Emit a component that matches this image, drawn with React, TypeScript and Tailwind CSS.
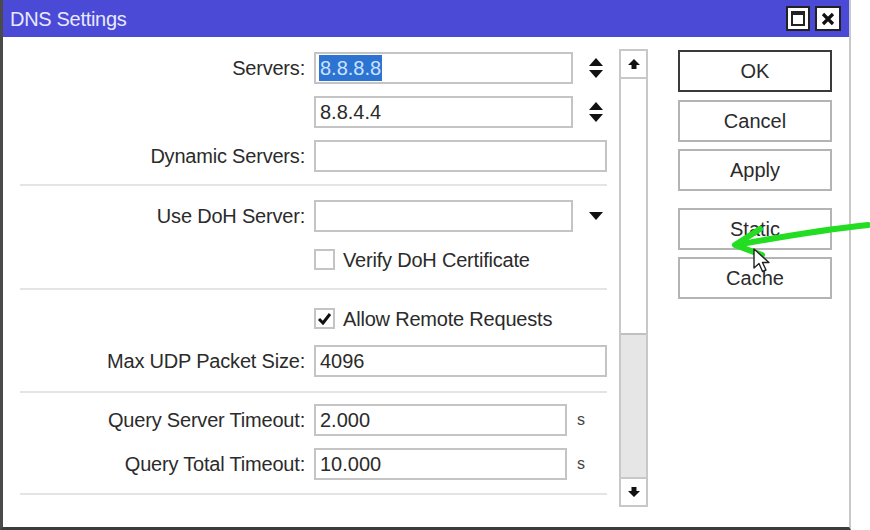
import * as React from 'react'

const font = { fontFamily: '"Liberation Sans", Arial, sans-serif' }

function UpDownIcon() {
    return (
        <svg width="16" height="24" viewBox="0 0 16 24" className="shrink-0">
            <polygon points="8,2 15,10 1,10" fill="#111" />
            <polygon points="1,14 15,14 8,22" fill="#111" />
        </svg>
    )
}

function DropIcon() {
    return (
        <svg width="16" height="10" viewBox="0 0 16 10" className="shrink-0">
            <polygon points="1,1 15,1 8,9" fill="#111" />
        </svg>
    )
}

function ScrollArrow({ down }: { down?: boolean }) {
    return (
        <svg width="14" height="12" viewBox="0 0 14 12" className={down ? 'rotate-180' : ''}>
            <polygon points="7,1 13,7 9.5,7 9.5,11 4.5,11 4.5,7 1,7" fill="#111" />
        </svg>
    )
}

function Label({ children }: { children?: React.ReactNode }) {
    return (
        <div className="w-[311px] shrink-0 pr-[9px] text-right text-[20px] leading-none tracking-[-0.2px] text-[#2b2b2b]">
            {children}
        </div>
    )
}

function Field({ value, width, selected }: { value?: string; width: string; selected?: boolean }) {
    return (
        <div className={`${width} flex h-[32px] shrink-0 items-center border-2 border-[#c4c4c4] bg-white px-[3px] text-[20px] text-[#2b2b2b]`}>
            {value ? (
                selected ? (
                    <span className="bg-[#2c73d2] px-[1px] leading-[26px] text-[#cbe4ff]">{value}</span>
                ) : (
                    <span className="pl-[1px]">{value}</span>
                )
            ) : null}
        </div>
    )
}

function Checkbox({ checked, label }: { checked?: boolean; label: string }) {
    return (
        <div className="flex h-[21px] items-center">
            <div className="w-[311px] shrink-0" />
            <div className="flex h-[21px] w-[21px] items-center justify-center border-2 border-[#c4c4c4] bg-white">
                {checked ? (
                    <svg width="15" height="13" viewBox="0 0 15 13">
                        <path d="M2 7 L6 11 L13 2" fill="none" stroke="#111" strokeWidth="3" />
                    </svg>
                ) : null}
            </div>
            <span className="ml-[8px] text-[20px] tracking-[-0.2px] text-[#2b2b2b]">{label}</span>
        </div>
    )
}

function Separator({ className }: { className: string }) {
    return <div className={`${className} ml-[17px] h-[2px] w-[587px] bg-[#e4e4e4]`} />
}

function Btn({ children, primary, className }: { children: React.ReactNode; primary?: boolean; className?: string }) {
    return (
        <div
            className={`${className ?? ''} flex h-[42px] w-[154px] items-center justify-center bg-white text-[20px] text-[#2b2b2b] ${
                primary ? 'border-2 border-[#3a3a3a]' : 'border-2 border-[#b4b4b4]'
            }`}
        >
            {children}
        </div>
    )
}

export default function App() {
    return (
        <div className="relative h-[530px] w-[870px] overflow-hidden bg-white" style={font}>
            <div className="flex h-[530px] w-[851px] flex-col border-b-[3px] border-l-[3px] border-r-2 border-b-[#3c3c3c] border-l-[#4a4a4a] border-r-[#c8c8c8]">
                {/* title bar */}
                <div className="flex h-[37px] shrink-0 items-center bg-[#4a4ad6] pl-[7px] pr-[8px]">
                    <span className="text-[20px] tracking-[-0.3px] text-[#e8e8ff]">DNS Settings</span>
                    <div className="ml-auto flex gap-[5px]">
                        <div className="flex h-[25px] w-[24px] items-center justify-center border-2 border-[#222] bg-white">
                            <div className="h-[15px] w-[14px] border-2 border-t-[4px] border-[#222]" />
                        </div>
                        <div className="flex h-[25px] w-[26px] items-center justify-center border-2 border-[#222] bg-white">
                            <svg width="14" height="14" viewBox="0 0 14 14">
                                <path d="M2 2 L12 12 M12 2 L2 12" stroke="#111" strokeWidth="3.2" />
                            </svg>
                        </div>
                    </div>
                </div>

                {/* body */}
                <div className="flex flex-1">
                    {/* form */}
                    <div className="w-[616px] shrink-0 pt-[15px]">
                        <div className="flex h-[32px] items-center">
                            <Label>Servers:</Label>
                            <Field value="8.8.8.8" width="w-[259px]" selected />
                            <div className="ml-[15px]"><UpDownIcon /></div>
                        </div>
                        <div className="mt-[12px] flex h-[32px] items-center">
                            <Label />
                            <Field value="8.8.4.4" width="w-[259px]" />
                            <div className="ml-[15px]"><UpDownIcon /></div>
                        </div>
                        <div className="mt-[12px] flex h-[32px] items-center">
                            <Label>Dynamic Servers:</Label>
                            <Field width="w-[293px]" />
                        </div>
                        <Separator className="mt-[12px] mb-[14px]" />
                        <div className="flex h-[32px] items-center">
                            <Label>Use DoH Server:</Label>
                            <Field width="w-[259px]" />
                            <div className="ml-[15px]"><DropIcon /></div>
                        </div>
                        <div className="mt-[17px]">
                            <Checkbox label="Verify DoH Certificate" />
                        </div>
                        <Separator className="mt-[18px] mb-[18px]" />
                        <Checkbox checked label="Allow Remote Requests" />
                        <div className="mt-[16px] flex h-[32px] items-center">
                            <Label>Max UDP Packet Size:</Label>
                            <Field value="4096" width="w-[293px]" />
                        </div>
                        <Separator className="mt-[14px] mb-[11px]" />
                        <div className="flex h-[32px] items-center">
                            <Label>Query Server Timeout:</Label>
                            <Field value="2.000" width="w-[253px]" />
                            <span className="ml-[10px] text-[16px] text-[#444]">s</span>
                        </div>
                        <div className="mt-[12px] flex h-[32px] items-center">
                            <Label>Query Total Timeout:</Label>
                            <Field value="10.000" width="w-[253px]" />
                            <span className="ml-[10px] text-[16px] text-[#444]">s</span>
                        </div>
                        <Separator className="mt-[13px]" />
                    </div>

                    {/* scrollbar */}
                    <div className="mt-[12px] flex h-[458px] w-[29px] shrink-0 flex-col border-2 border-[#c8c8c8] bg-white">
                        <div className="flex h-[28px] items-center justify-center border-b-2 border-[#c8c8c8]">
                            <ScrollArrow />
                        </div>
                        <div className="h-[254px]" />
                        <div className="flex-1 border-t-2 border-[#c0c0c0] bg-[#e6e6e6]" />
                        <div className="flex h-[28px] items-center justify-center border-t-2 border-[#c8c8c8]">
                            <ScrollArrow down />
                        </div>
                    </div>

                    {/* buttons */}
                    <div className="ml-[30px] flex flex-col pt-[13px]">
                        <Btn primary>OK</Btn>
                        <Btn className="mt-[8px]">Cancel</Btn>
                        <Btn className="mt-[7px]">Apply</Btn>
                        <Btn className="mt-[17px]">Static</Btn>
                        <Btn className="mt-[7px]">Cache</Btn>
                    </div>
                </div>
            </div>

            {/* green annotation arrow */}
            <svg className="pointer-events-none absolute left-[720px] top-[215px]" width="150" height="50" viewBox="0 0 150 50">
                <path d="M148 10 C 110 14, 60 22, 16 30" fill="none" stroke="#22dd22" strokeWidth="6" strokeLinecap="round" />
                <path d="M40 14 L15 30 L42 40" fill="none" stroke="#22dd22" strokeWidth="6" strokeLinecap="round" strokeLinejoin="round" />
            </svg>

            {/* mouse cursor */}
            <svg className="pointer-events-none absolute left-[752px] top-[247px]" width="22" height="28" viewBox="0 0 22 28">
                <path d="M2 2 L2 21 L7 16.5 L10.5 24.5 L14 23 L10.5 15.5 L17 15.5 Z" fill="#fff" stroke="#222" strokeWidth="1.4" strokeLinejoin="round" />
            </svg>
        </div>
    )
}
